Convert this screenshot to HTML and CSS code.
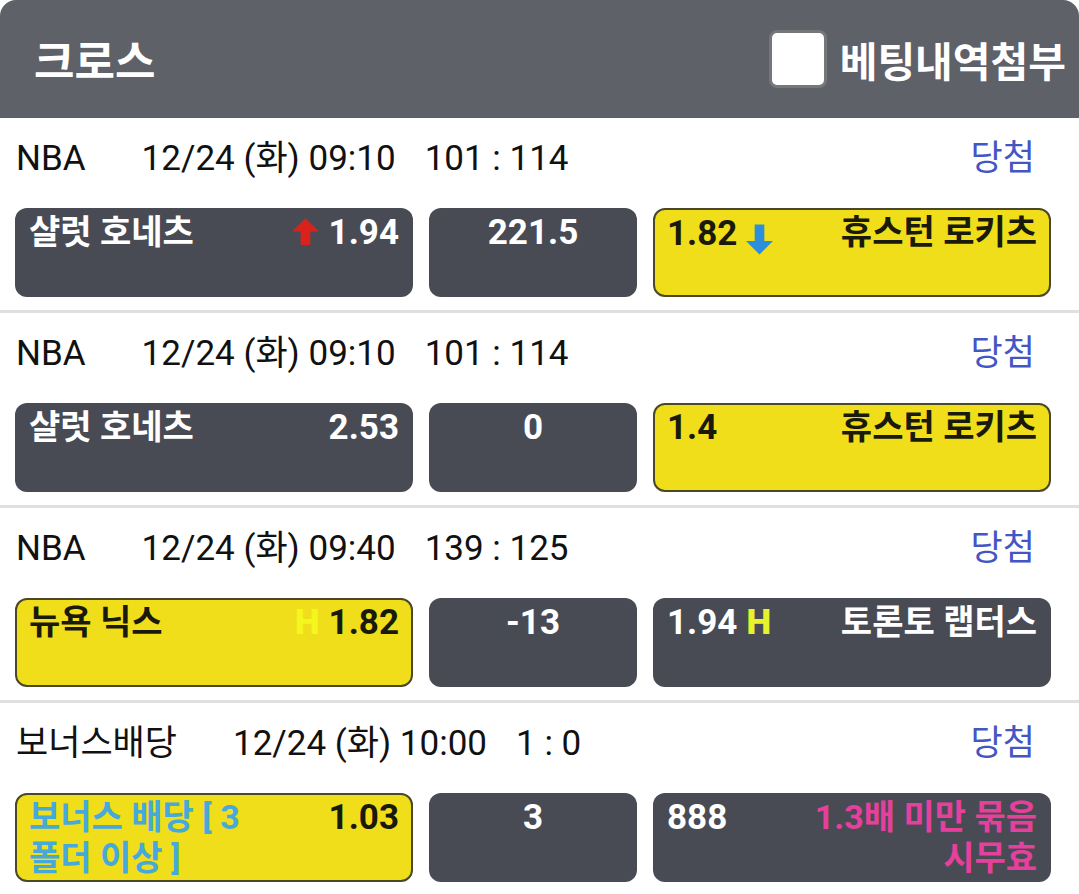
FILE: index.html
```html
<!DOCTYPE html>
<html lang="ko">
<head>
    <meta charset="UTF-8">
    <title>크로스</title>
    <link rel="stylesheet" href="styles.css">
</head>
<body>
<div class="header">
    <div class="title">크로스</div>
    <label class="attach">
        <span class="checkbox"></span>
        <span>베팅내역첨부</span>
    </label>
</div>

<div class="bet">
    <div class="info">
        <span class="league">NBA</span>
        <span class="date">12/24 (화) 09:10</span>
        <span class="score">101 : 114</span>
        <span class="result">당첨</span>
    </div>
    <div class="picks">
        <div class="pick">
            <span class="team">샬럿 호네츠</span>
            <span class="odds">
                <svg class="arrow up" viewBox="0 0 28 28"><polygon points="14,0 28,14 19,14 19,28 9,28 9,14 0,14"/></svg>1.94
            </span>
        </div>
        <div class="pick mid">221.5</div>
        <div class="pick on">
            <span class="odds">1.82<svg class="arrow down" viewBox="0 0 28 31"><polygon points="14,31 28,17 19,17 19,0 9,0 9,17 0,17"/></svg></span>
            <span class="team">휴스턴 로키츠</span>
        </div>
    </div>
</div>

<div class="bet">
    <div class="info">
        <span class="league">NBA</span>
        <span class="date">12/24 (화) 09:10</span>
        <span class="score">101 : 114</span>
        <span class="result">당첨</span>
    </div>
    <div class="picks">
        <div class="pick">
            <span class="team">샬럿 호네츠</span>
            <span class="odds">2.53</span>
        </div>
        <div class="pick mid">0</div>
        <div class="pick on">
            <span class="odds">1.4</span>
            <span class="team">휴스턴 로키츠</span>
        </div>
    </div>
</div>

<div class="bet">
    <div class="info">
        <span class="league">NBA</span>
        <span class="date">12/24 (화) 09:40</span>
        <span class="score">139 : 125</span>
        <span class="result">당첨</span>
    </div>
    <div class="picks">
        <div class="pick on">
            <span class="team">뉴욕 닉스</span>
            <span class="odds"><b class="h before">H</b>1.82</span>
        </div>
        <div class="pick mid">-13</div>
        <div class="pick">
            <span class="odds">1.94<b class="h after">H</b></span>
            <span class="team">토론토 랩터스</span>
        </div>
    </div>
</div>

<div class="bet last">
    <div class="info">
        <span class="league">보너스배당</span>
        <span class="date">12/24 (화) 10:00</span>
        <span class="score">1 : 0</span>
        <span class="result">당첨</span>
    </div>
    <div class="picks">
        <div class="pick on">
            <span class="team bonus">보너스 배당 [ 3 폴더 이상 ]</span>
            <span class="odds">1.03</span>
        </div>
        <div class="pick mid">3</div>
        <div class="pick">
            <span class="odds">888</span>
            <span class="team note">1.3배 미만 묶음 시무효</span>
        </div>
    </div>
</div>
</body>
</html>
```

FILE: styles.css
```css
body {
    margin: 0;
    background-color: #fff;
    color: #111;
    font-family: Roboto, "Noto Sans CJK KR", sans-serif;
}
.header {
    height: 118px;
    display: flex;
    align-items: center;
    justify-content: space-between;
    padding: 0 13px 0 34px;
    background-color: #5f6168;
    border-radius: 16px 16px 0 0;
    color: #fff;
    font-weight: bold;
}
.title {
    font-size: 44px;
}
.attach {
    display: flex;
    align-items: center;
    gap: 13px;
    font-size: 41px;
}
.checkbox {
    width: 52px;
    height: 52px;
    background-color: #fff;
    border: 3px solid #767779;
    border-radius: 8px;
}
.bet {
    padding-bottom: 13px;
    border-bottom: 3px solid #e0e0e0;
}
.bet.last {
    border-bottom: none;
}
.info {
    height: 70px;
    display: flex;
    align-items: baseline;
    padding: 6px 44px 0 16px;
    font-size: 35px;
    line-height: 70px;
    margin-bottom: 14px;
}
.league {
    margin-right: 56px;
}
.date {
    margin-right: 29px;
}
.result {
    margin-left: auto;
    color: #4455c4;
}
.picks {
    display: grid;
    grid-template-columns: 398px 208px 398px;
    gap: 16px;
    padding-left: 15px;
}
.pick {
    box-sizing: border-box;
    height: 89px;
    display: flex;
    justify-content: space-between;
    align-items: flex-start;
    gap: 20px;
    padding: 4px 14px 0;
    background-color: #494b54;
    border-radius: 12px;
    color: #fff;
    font-size: 35px;
    font-weight: bold;
    line-height: 41px;
    word-break: keep-all;
}
.pick.on {
    background-color: #f0de1b;
    border: 2px solid #4a4828;
    padding: 2px 12px 0;
    color: #1a1a0a;
}
.pick.mid {
    justify-content: center;
}
.odds {
    display: flex;
    align-items: center;
    white-space: nowrap;
}
.team {
    text-align: right;
    font-size: 34px;
}
.pick .team:first-child {
    text-align: left;
}
.arrow {
    width: 27px;
    height: 27px;
}
.arrow.up {
    fill: #d8221b;
    margin-right: 10px;
    margin-top: -2px;
}
.arrow.down {
    height: 31px;
    fill: #2b8fdc;
    margin-left: 9px;
    margin-top: 12px;
}
.h {
    color: #f4f61e;
}
.h.before {
    margin-right: 9px;
}
.h.after {
    margin-left: 9px;
}
.pick:not(.on) .h {
    color: #e6f22c;
}
.bonus {
    color: #46a9d9;
    max-width: 250px;
}
.note {
    color: #e4409c;
}
```
